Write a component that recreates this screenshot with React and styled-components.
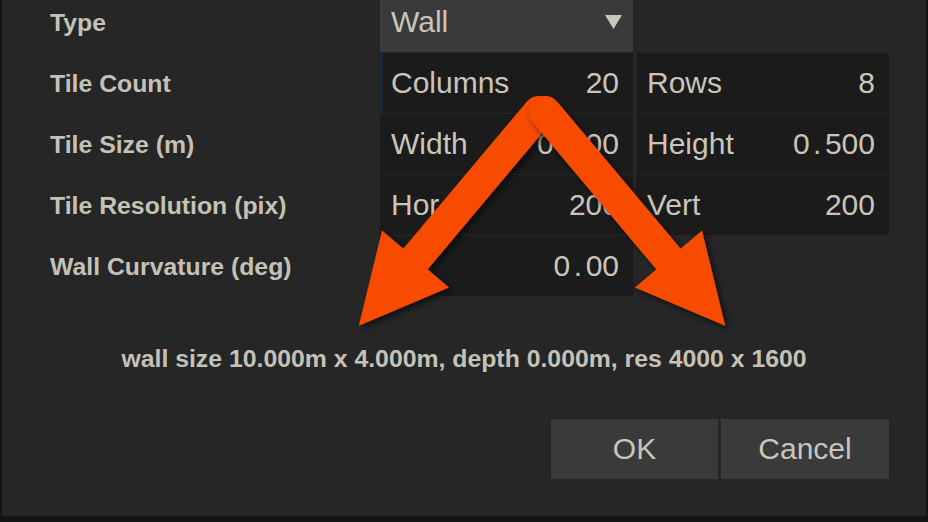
import React from "react";
import styled, { createGlobalStyle } from "styled-components";

const Global = createGlobalStyle`
  html, body { margin: 0; padding: 0; background: #141414; overflow: hidden; }
  body { width: 928px; height: 522px; font-family: "Liberation Sans", Arial, sans-serif; }
`;

const Page = styled.div`
  position: relative;
  width: 928px;
  height: 522px;
  overflow: hidden;
`;

const Dialog = styled.div`
  margin-left: 2px;
  width: 924px;
  height: 516px;
  background: #262626;
  display: flex;
  flex-direction: column;
  overflow: hidden;
`;

const Form = styled.div`
  margin-top: -8px;
  padding-left: 48px;
  display: grid;
  grid-template-columns: 327px 253px 253px;
  grid-auto-rows: 60px;
  column-gap: 3px;
  row-gap: 1px;
`;

const Label = styled.div`
  display: flex;
  align-items: center;
  padding-top: 1px;
  font-weight: 700;
  font-size: 24.8px;
  color: #c4c1b7;
  white-space: nowrap;
`;

const Select = styled.div`
  display: flex;
  align-items: center;
  justify-content: space-between;
  padding: 0 11px;
  background: #3a3a3a;
  font-size: 30px;
  color: #c9c5bb;
`;

const Field = styled.div`
  display: flex;
  align-items: center;
  justify-content: space-between;
  padding: 0 14px 0 11px;
  background: #1b1b1b;
  font-size: 30px;
  color: #c9c5bb;
  box-sizing: border-box;
  border-left: ${(p) => (p.$edge ? `${p.$edge}px solid #1d2836` : "none")};
  padding-left: ${(p) => (p.$edge ? 11 - p.$edge : 11)}px;
`;

const Dot = styled.span`
  margin: 0 3.5px;
`;

const Summary = styled.div`
  margin-top: 48px;
  text-align: center;
  font-weight: 700;
  font-size: 24.8px;
  line-height: 30px;
  color: #c4c1b7;
`;

const Buttons = styled.div`
  margin-top: 45px;
  display: flex;
  justify-content: flex-end;
  gap: 3px;
  padding-right: 37px;
`;

const Button = styled.div`
  width: ${(p) => p.$w}px;
  height: 60px;
  display: flex;
  align-items: center;
  justify-content: center;
  background: #3a3a3a;
  font-size: 30px;
  color: #c9c5bb;
`;

const Overlay = styled.svg`
  position: absolute;
  left: 0;
  top: 0;
  pointer-events: none;
`;

const Num = ({ v }) => {
  const [a, b] = v.split(".");
  return (
    <span>
      {a}
      {b !== undefined && (
        <>
          <Dot>.</Dot>
          {b}
        </>
      )}
    </span>
  );
};

const Arrow = ({ start, base, c1, c2, tip }) => (
  <g filter="url(#sh)">
    <line
      x1={start[0]}
      y1={start[1]}
      x2={base[0]}
      y2={base[1]}
      stroke="#f74c00"
      strokeWidth="32"
      strokeLinecap="round"
    />
    <polygon points={`${c1.join(",")} ${tip.join(",")} ${c2.join(",")}`} fill="#f74c00" />
  </g>
);

export default function App() {
  return (
    <Page>
      <Global />
      <Dialog>
        <Form>
          <Label>Type</Label>
          <Select>
            <span>Wall</span>
            <svg width="17" height="14" viewBox="0 0 17 14">
              <polygon points="0,0 17,0 8.5,14" fill="#c9c5bb" />
            </svg>
          </Select>
          <div />

          <Label>Tile Count</Label>
          <Field $edge={3}>
            <span>Columns</span>
            <span>20</span>
          </Field>
          <Field $edge={1}>
            <span>Rows</span>
            <span>8</span>
          </Field>

          <Label>Tile Size (m)</Label>
          <Field>
            <span>Width</span>
            <Num v="0.500" />
          </Field>
          <Field $edge={1}>
            <span>Height</span>
            <Num v="0.500" />
          </Field>

          <Label>Tile Resolution (pix)</Label>
          <Field>
            <span>Hor</span>
            <span>200</span>
          </Field>
          <Field>
            <span>Vert</span>
            <span>200</span>
          </Field>

          <Label>Wall Curvature (deg)</Label>
          <Field>
            <span />
            <Num v="0.00" />
          </Field>
          <div />
        </Form>
        <Summary>wall size 10.000m x 4.000m, depth 0.000m, res 4000 x 1600</Summary>
        <Buttons>
          <Button $w={167}>OK</Button>
          <Button $w={168}>Cancel</Button>
        </Buttons>
      </Dialog>
      <Overlay width="928" height="522" viewBox="0 0 928 522">
        <defs>
          <filter id="sh" x="-20%" y="-20%" width="140%" height="140%">
            <feDropShadow dx="3" dy="3" stdDeviation="3" floodColor="#000" floodOpacity="0.6" />
          </filter>
        </defs>
        <Arrow
          start={[539, 112]}
          base={[415.5, 259]}
          c1={[382, 230.5]}
          c2={[449, 287.5]}
          tip={[358.8, 325.7]}
        />
        <Arrow
          start={[545, 112]}
          base={[668.5, 259]}
          c1={[702, 230.5]}
          c2={[635, 287.5]}
          tip={[725.2, 325.7]}
        />
      </Overlay>
    </Page>
  );
}
